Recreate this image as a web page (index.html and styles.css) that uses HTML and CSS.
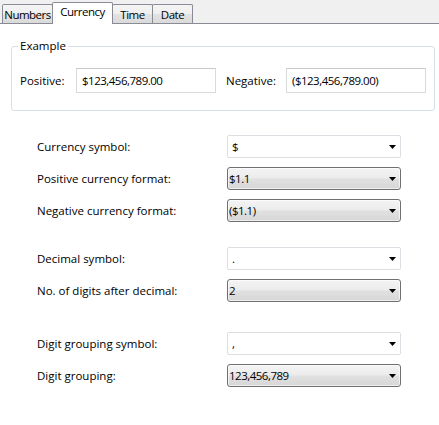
FILE: index.html
```html
<!DOCTYPE html>
<html>
<head>
<meta charset="utf-8">
<link rel="stylesheet" href="styles.css">
</head>
<body>
<div class="tabs">
  <div class="tab tab-numbers">Numbers</div>
  <div class="tab tab-currency active">Currency</div>
  <div class="tab tab-time">Time</div>
  <div class="tab tab-date">Date</div>
</div>
<fieldset class="example">
  <legend>Example</legend>
  <div class="ex-row">
    <span class="ex-label">Positive:</span>
    <div class="textbox">$123,456,789.00</div>
    <span class="ex-label neg">Negative:</span>
    <div class="textbox">($123,456,789.00)</div>
  </div>
</fieldset>
<div class="settings">
  <div class="group g1">
    <div class="row"><span class="label">Currency symbol:</span><div class="combo edit"><span class="val">$</span><svg class="arrow" width="7" height="4" viewBox="0 0 7 4"><path d="M0 0H7L3.5 4Z"/></svg></div></div>
    <div class="row"><span class="label">Positive currency format:</span><div class="combo list"><span class="val">$1.1</span><svg class="arrow" width="7" height="4" viewBox="0 0 7 4"><path d="M0 0H7L3.5 4Z"/></svg></div></div>
    <div class="row"><span class="label">Negative currency format:</span><div class="combo list"><span class="val">($1.1)</span><svg class="arrow" width="7" height="4" viewBox="0 0 7 4"><path d="M0 0H7L3.5 4Z"/></svg></div></div>
  </div>
  <div class="group g2">
    <div class="row"><span class="label">Decimal symbol:</span><div class="combo edit"><span class="val">.</span><svg class="arrow" width="7" height="4" viewBox="0 0 7 4"><path d="M0 0H7L3.5 4Z"/></svg></div></div>
    <div class="row"><span class="label">No. of digits after decimal:</span><div class="combo list"><span class="val">2</span><svg class="arrow" width="7" height="4" viewBox="0 0 7 4"><path d="M0 0H7L3.5 4Z"/></svg></div></div>
  </div>
  <div class="group g3">
    <div class="row"><span class="label">Digit grouping symbol:</span><div class="combo edit"><span class="val">,</span><svg class="arrow" width="7" height="4" viewBox="0 0 7 4"><path d="M0 0H7L3.5 4Z"/></svg></div></div>
    <div class="row"><span class="label">Digit grouping:</span><div class="combo list"><span class="val">123,456,789</span><svg class="arrow" width="7" height="4" viewBox="0 0 7 4"><path d="M0 0H7L3.5 4Z"/></svg></div></div>
  </div>
</div>
</body>
</html>
```

FILE: styles.css
```css
html, body {
  margin: 0;
  padding: 0;
  background: #ffffff;
}
body {
  font-family: "Open Sans", "Noto Sans", sans-serif;
  font-size: 11.5px;
  color: #000000;
}

/* Tabs */
.tabs {
  display: flex;
  align-items: flex-end;
  height: 23px;
  padding-left: 2px;
  background: #f0f0f0;
  border-bottom: 1px solid #898c95;
}
.tab {
  box-sizing: border-box;
  height: 19px;
  padding-top: 1px;
  line-height: 17px;
  text-align: center;
  letter-spacing: -0.5px;
  border: 1px solid #898c95;
  border-bottom: none;
  border-radius: 2px 2px 0 0;
  margin-left: -1px;
  background: linear-gradient(#f5f5f5 0%, #eeeeee 50%, #e3e3e3 50%, #dadada 100%);
}
.tab-numbers { width: 51px; margin-left: 0; }
.tab-currency { width: 61px; }
.tab-time { width: 41px; }
.tab-date { width: 41px; }
.tab.active {
  height: 22px;
  padding-top: 0;
  margin-bottom: -1px;
  background: #ffffff;
}

/* Example group */
.example {
  margin: 14px 4px 0 11px;
  padding: 14px 0 17px 8px;
  border: 1px solid #d5dfe5;
  border-radius: 3px;
}
.example legend {
  padding: 0 2px;
  margin-left: -2px;
  line-height: 16px;
}
.ex-row {
  display: flex;
  align-items: center;
}
.ex-label {
  width: 56px;
}
.ex-label.neg {
  width: 60px;
  margin-left: 10px;
}
.textbox {
  box-sizing: border-box;
  width: 140px;
  height: 25px;
  line-height: 23px;
  padding-left: 5px;
  letter-spacing: -0.5px;
  border: 1px solid #dadada;
  border-top-color: #c9c9c9;
}

/* Settings */
.settings {
  padding-left: 37px;
}
.group {
  display: flex;
  flex-direction: column;
  gap: 9px;
}
.g1 { margin-top: 24px; }
.g2 { margin-top: 25px; }
.g3 { margin-top: 30px; }
.row {
  display: flex;
  align-items: center;
}
.label {
  width: 190px;
}
.combo {
  box-sizing: border-box;
  width: 174px;
  height: 23px;
  display: flex;
  align-items: center;
  justify-content: space-between;
  padding-right: 4px;
}
.combo .val {
  letter-spacing: -0.5px;
}
.combo.edit {
  padding-left: 4px;
  border: 1px solid #dcdee3;
  border-radius: 2px;
  background: #ffffff;
}
.combo.list {
  padding-left: 1px;
  border: 1px solid #707070;
  border-radius: 3px;
  background: linear-gradient(#f4f4f4 0%, #ececec 45%, #e0e0e0 55%, #d6d6d6 100%);
  box-shadow: inset 0 0 0 1px rgba(255,255,255,0.6);
}
.arrow {
  margin-top: 1px;
  fill: #000000;
}
```
